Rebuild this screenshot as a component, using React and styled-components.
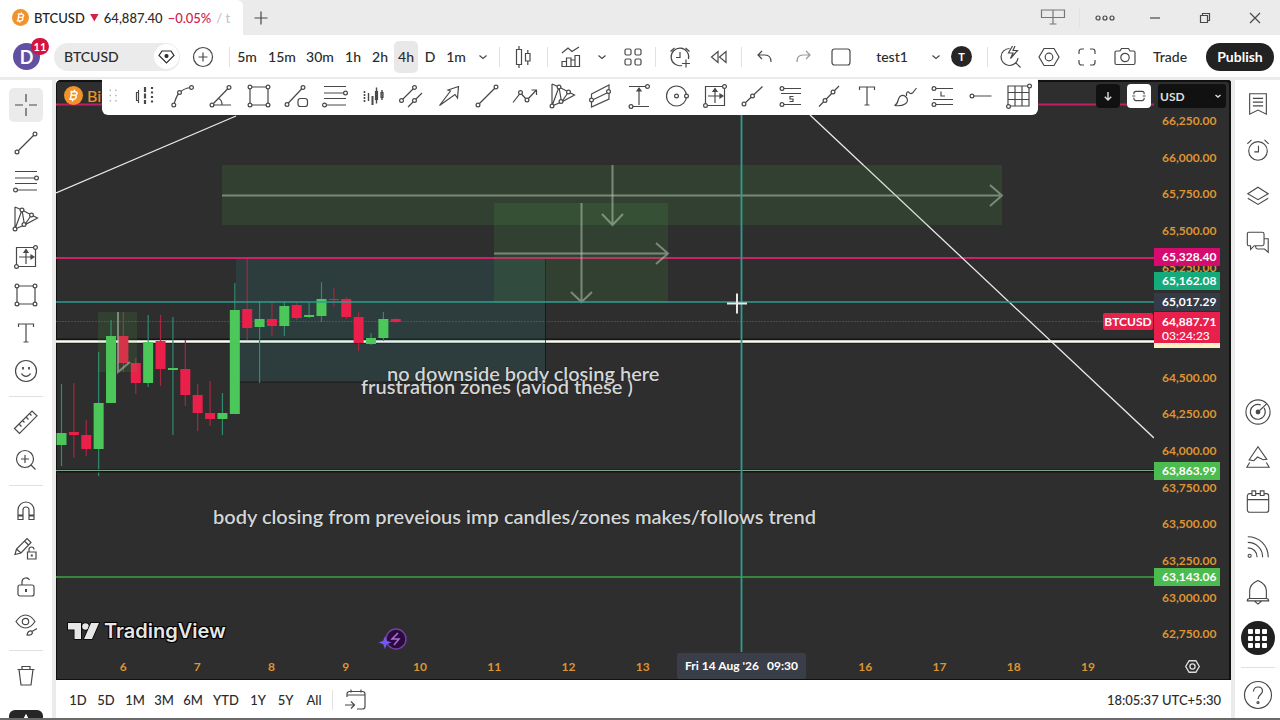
import styled, { createGlobalStyle } from 'styled-components';

const GlobalStyle = createGlobalStyle`
  * {
    box-sizing: border-box;
  }

  html,
  body,
  #root {
    height: 100%;
    margin: 0;
  }

  body {
    overflow: hidden;
    background: #fff;
    color: #2b2b2b;
    font-family: Lato, 'Open Sans', sans-serif;
    font-size: 14px;
    font-weight: 500;
  }

  button,
  select {
    margin: 0;
    padding: 0;
    border: 0;
    background: none;
    color: inherit;
    font: inherit;
  }
`;

/* ---------- icons ---------- */

const Svg = styled.svg`
  display: block;
  flex: none;
  fill: none;
  stroke: currentColor;
  stroke-width: ${(props) => props.$stroke || 1.2};
  overflow: visible;
`;

const Node = ({ x, y, r = 1.9 }) => <circle cx={x} cy={y} r={r} fill="#fff" />;

const shapes = {
  cross: <path d="M14 3v8M14 17v8M3 14h8M17 14h8" />,
  line: (
    <>
      <path d="M5.500 22.500L22.500 5.500" />
      <Node x={5} y={23} />
      <Node x={23} y={5} />
    </>
  ),
  fib: (
    <>
      <path d="M3 4.500h22M3 11h20M3 16.500h22M4 23h21" />
      <Node x={24.5} y={11} />
      <Node x={3.5} y={23} />
    </>
  ),
  pattern: (
    <>
      <path d="M3 2v22l7-19 2.500 15 13-7-6-3-9.500-5M3 2l7 3M3 24l9.500-4 7-10" />
      <Node x={10} y={5} />
      <Node x={19.5} y={10} />
      <Node x={12} y={19.5} />
      <Node x={3} y={24} />
    </>
  ),
  range: (
    <>
      <path d="M4.500 23.500V4.500h19v19zM14 21V8M7 14h13" />
      <path d="M14 6.500l2 3h-4zM22 14l-3-2v4z" fill="currentColor" />
      <Node x={23.5} y={4.5} />
      <Node x={4.5} y={23.5} />
    </>
  ),
  rect: (
    <>
      <path d="M5 5h18v18H5z" />
      <Node x={5} y={5} />
      <Node x={23} y={5} />
      <Node x={5} y={23} />
      <Node x={23} y={23} />
    </>
  ),
  text: <path d="M6.500 8V5h15v3M14 5v18M11.500 23h5" />,
  smile: (
    <>
      <circle cx="14" cy="14" r="10.500" />
      <path d="M9.500 16.500c1 2 2.500 2.800 4.500 2.800s3.500-.8 4.500-2.800" />
      <path d="M11 10v2.500M17 10v2.500" strokeWidth="1.800" />
    </>
  ),
  ruler: (
    <path d="M2.500 20.500L20 3l5 4.800L7.500 25.500zM7 16l2.500 2.500M10.500 12.500l2 2M14 9l2.500 2.500M17.500 5.500l2 2" />
  ),
  zoom: (
    <>
      <circle cx="13" cy="13" r="8.500" />
      <path d="M19 19l4.500 4.500M13 9v8M9 13h8" />
    </>
  ),
  magnet: (
    <>
      <path d="M6 22.500V13a8 8 0 0 1 16 0v9.500h-5V13a3 3 0 0 0-6 0v9.500z" />
      <path d="M6 18.500h5M17 18.500h5" strokeWidth="2" />
    </>
  ),
  pencilLock: (
    <>
      <path d="M3 19.500L4.500 14 15 3.500l4 4L9 18zM12.500 6l4 4M4.500 14L9 18" />
      <path d="M15.500 17h8.500v7h-8.500zM17 17v-2.500a2.500 2.500 0 0 1 5 0" />
      <path d="M19.800 19.500v2" strokeWidth="2" />
    </>
  ),
  lock: (
    <>
      <rect x="6" y="12" width="16" height="11" rx="2" />
      <path d="M10 12V8.500a4 4 0 0 1 7.500-1.500" />
      <path d="M14 16v3" strokeWidth="2" />
    </>
  ),
  eye: (
    <>
      <path d="M4 10.500C7 6 10 4 13.500 4s6.500 2 9.500 6.500C20 15 17 17 13.500 17S7 15 4 10.500z" />
      <circle cx="13.500" cy="10.500" r="3.200" />
      <path d="M15 24c.5-3 2-4.500 4.500-4l1 2c-1 2-3 2.500-5.500 2zM20 20.500l5-3" />
    </>
  ),
  trash: <path d="M5.500 7.500h17M7 7.500l2 15.500h10l2-15.500M10 7V4.500h8V7" />,
  bars: (
    <>
      <path d="M7.500 8v13M5 18.500h2.500M7.500 10.500H5.500v8" strokeWidth="1.200" />
      <path d="M14 5v17" strokeWidth="2.200" strokeDasharray="5 1.500" />
      <path d="M21 5v16" strokeWidth="2.200" strokeDasharray="2 2.500" />
    </>
  ),
  curve: (
    <>
      <path d="M5 23c1-5.500 3-9.500 5.500-12.500C13 8 17 6 22.500 5.500" />
      <Node x={4.8} y={23} />
      <Node x={10.5} y={10.5} />
      <Node x={22.5} y={5.5} />
    </>
  ),
  angle: (
    <>
      <path d="M21.500 6L5 23h19M11.500 16.500c2.500 1 3.500 3 3.500 6" />
      <Node x={22} y={5.5} />
      <Node x={5} y={23} />
    </>
  ),
  lineShape: (
    <>
      <path d="M4 22.500L19.500 6" />
      <rect x="15" y="16.500" width="9.500" height="8" rx="2.500" fill="#fff" />
      <Node x={4} y={22.5} />
      <Node x={20} y={5.5} />
    </>
  ),
  ghost: (
    <>
      <path d="M5.500 9v11" strokeWidth="1.600" strokeDasharray="2 1" />
      <path d="M9.500 11v8M17.500 5.500v16M23 8v10" strokeWidth="1.400" />
      <path d="M13.500 14v9" strokeWidth="2" />
      <path d="M16.500 9.500h2v8h-2zM22 10.500h2v5h-2z" />
    </>
  ),
  channel: (
    <>
      <path d="M4.500 18.500L17 6M11 25l14-14" />
      <Node x={4.5} y={18.5} />
      <Node x={17.5} y={5.5} />
      <Node x={17.5} y={18.5} />
    </>
  ),
  arrow: <path d="M4.500 23.500L15.500 9l-2.500-1 10.500-3.500-1 11.500-2.500-3.500z" />,
  path: (
    <>
      <path d="M2 20.500L9.500 11l6.500 7 9-9.500M20.500 8H25.500v5" />
      <Node x={9.5} y={10.5} />
      <Node x={16} y={18} />
    </>
  ),
  pitch: (
    <>
      <path d="M4.500 12L22 3v14L4.500 25zM4.500 18.500L22 10" />
      <Node x={4.5} y={18} />
      <Node x={21.5} y={9.5} />
    </>
  ),
  measure: (
    <>
      <path d="M4 4.500h17M6 24.500h18M14 23V7" />
      <path d="M14 6l2 3h-4z" fill="currentColor" />
      <Node x={22.5} y={4.5} />
      <Node x={6} y={24.5} />
    </>
  ),
  circle: (
    <>
      <circle cx="13.500" cy="14" r="10" />
      <Node x={13.5} y={14} />
      <Node x={23.5} y={14} />
    </>
  ),
  ray: (
    <>
      <path d="M5 22L23.500 4.500" />
      <Node x={5} y={22} />
      <Node x={13.5} y={14} />
    </>
  ),
  shortPos: (
    <>
      <path d="M5 6.500h19M4 11.500h20M5 22.500h19M16.500 14.500h-3.500v2.500h3v2.500H12.500" />
      <Node x={5} y={6.500} />
      <Node x={5} y={22.500} />
    </>
  ),
  extended: (
    <>
      <path d="M4 24.500L24 4" />
      <Node x={10} y={18.5} />
      <Node x={18} y={10} />
    </>
  ),
  brush: (
    <path d="M3.500 23.500c3-1 3-3.500 4-6.500 1-3.200 4-5 7-2.500s2.500 5.500-.5 7.500-6.500 2-10.500 1.500zM15.500 14C15 10 17 9 18 10.500s2 1.500 3.500.5l4-5" />
  ),
  longPos: (
    <>
      <path d="M5 6.500h19M4 17.500h20M5 22.500h19M12 9.500v4.500h4" />
      <Node x={5} y={6.500} />
      <Node x={5} y={22.500} />
    </>
  ),
  horizontal: (
    <>
      <path d="M5 14h19.500" />
      <Node x={5} y={14} />
    </>
  ),
  grid: (
    <>
      <path d="M3 4h21v20H3zM3 10.500h21M3 17.500h21M10 4v20M17 4v20" />
      <Node x={24.5} y={4} />
      <Node x={3.5} y={24.5} />
    </>
  ),
  candles: (
    <path d="M6.500 6.500h5v15h-5zM9 3v3.500M9 21.500V25M15.500 10.500h4.500v7.500h-4.500zM17.800 7v3.500M17.800 18v4" />
  ),
  indicators: (
    <path d="M5 10l6-5 4 3.500L22 4M5 23.500v-5h4.500v5zM9.500 23.500V15H14v8.500zM14 23.500V17h4v6.500zM18 23.500v-11h4.500v11z" />
  ),
  blocks: (
    <>
      <rect x="6" y="6" width="6" height="6" rx="1.500" />
      <rect x="16" y="6" width="6" height="6" rx="1.500" />
      <rect x="6" y="16" width="6" height="6" rx="1.500" />
      <rect x="16" y="16" width="6" height="6" rx="1.500" />
    </>
  ),
  alert: (
    <path d="M16 22.500A8.800 8.800 0 1 1 22.500 16M14 9v5.500h-4M4.500 8.500L8.500 5M23.500 8.500L19.500 5M20 16.500v8M16 20.500h8" />
  ),
  rewind: <path d="M13 8.500v11L6.500 14zM21 8.500v11L14.500 14z" />,
  undo: <path d="M11 8l-4 4 4 4M7 12h7c4 0 6 2 6 7" />,
  redo: <path d="M17 8l4 4-4 4M21 12h-7c-4 0-6 2-6 7" />,
  square: <rect x="5" y="6" width="18" height="16" rx="2.500" />,
  quick: (
    <path d="M12.500 5.500a8.500 8.500 0 1 0 8.500 9.500M18.500 19.500l5 5M15.500 3l-4 7h4.500l-2.500 5.500 7-8h-4.500L18 3" />
  ),
  hex: (
    <>
      <path d="M9 5.500h10l5 8.500-5 8.500H9L4 14z" />
      <circle cx="14" cy="14" r="3.800" />
    </>
  ),
  full: (
    <path d="M11 6H8.500A2.500 2.500 0 0 0 6 8.500V11M17 6h2.500A2.500 2.500 0 0 1 22 8.500V11M11 22H8.500A2.500 2.500 0 0 1 6 19.500V17M17 22h2.500a2.500 2.500 0 0 0 2.500-2.500V17" />
  ),
  reset: (
    <path d="M5 11V9.500A3.500 3.500 0 0 1 8.500 6h11A3.500 3.500 0 0 1 23 9.500V11M5 17v1.500A3.500 3.500 0 0 0 8.500 22h11a3.500 3.500 0 0 0 3.500-3.500V17M2.500 14h5M20.500 14h5" />
  ),
  camera: (
    <>
      <path d="M4 9.500a1.500 1.500 0 0 1 1.500-1.500H9l1.500-2.500h7L19 8h3.500A1.500 1.500 0 0 1 24 9.500V20a1.500 1.500 0 0 1-1.500 1.500h-17A1.500 1.500 0 0 1 4 20z" />
      <circle cx="14" cy="14.500" r="4.200" />
    </>
  ),
  plusRound: (
    <>
      <circle cx="14" cy="14" r="9.500" />
      <path d="M14 9.500v9M9.500 14h9" />
    </>
  ),
  chevron: <path d="M10.500 12.500l3.500 3 3.500-3" />,
  list: (
    <path d="M5 3h18v22l-9-4.500L5 25zM8.500 8h11M8.500 12h11M8.500 16h11" />
  ),
  clock: (
    <>
      <circle cx="14" cy="15" r="10" />
      <path d="M14.500 9.500V16H10M2.500 7.500L7 3M25.500 7.500L21 3" />
    </>
  ),
  layers: <path d="M14 4.500L25 11.500 14 18 3 11.500zM3 16.500L14 23l11-6.500" />,
  chat: (
    <path d="M4 3.500h14.500a2 2 0 0 1 2 2V16a2 2 0 0 1-2 2H10l-4 4v-4H4a1.500 1.500 0 0 1-1.500-1.500V5A1.500 1.500 0 0 1 4 3.500zM20.500 10.500H25V25l-4-3.500h-7.500a2 2 0 0 1-2-2V18" />
  ),
  radar: (
    <>
      <circle cx="14" cy="14" r="13" />
      <path d="M20.500 9.500A8 8 0 1 1 17 6.500M14 14L23.500 5" />
      <circle cx="14" cy="14" r="2" fill="currentColor" />
    </>
  ),
  peak: <path d="M14 3l9.500 13.500-4 .5-6-3-4 4-5-1zM5 20L2 25h24l-3-5" />,
  calendar: (
    <path d="M5 5h3M11 5h6M20 5h3a2.500 2.500 0 0 1 2.500 2.500v15A2.500 2.500 0 0 1 23 25H5a2.500 2.500 0 0 1-2.500-2.500v-15A2.500 2.500 0 0 1 5 5M2.500 11.500h23M7.500 2h4v5h-4zM16.500 2h4v5h-4z" />
  ),
  feed: (
    <>
      <path d="M3 3c12 0 22 9 22 22M3 9c9 0 16 7 16 16M3 15c6 0 10 4 10 10" />
      <circle cx="5" cy="23.500" r="1.700" />
    </>
  ),
  bell: (
    <path d="M14 1.500C8 4 5 8 5 13v8h18v-8c0-5-3-9-9-11.500zM5 21c-2 0-2.500 1-2.500 2.500h23c0-1.500-.5-2.500-2.500-2.500M10.500 24l3.500 3 3.500-3" />
  ),
  help: (
    <>
      <circle cx="14" cy="14" r="13.500" />
      <path d="M9.500 10.500c0-3 2-4.500 4.500-4.500s4.500 1.500 4.500 4c0 3.500-4.500 3.500-4.500 8" />
      <circle cx="14" cy="21.500" r="1" />
    </>
  ),
  goto: (
    <path d="M5 9h18M5 11V8a2.500 2.500 0 0 1 2.500-2.500h13A2.500 2.500 0 0 1 23 8v12.500a2.500 2.500 0 0 1-2.500 2.500H15M9 3.500v3M19 3.500v3M3 19h9M9 15.500l3.500 3.500L9 22.500" />
  ),
  minimize: <path d="M9 14h10" />,
  restore: <path d="M9.500 11.500h7v7h-7zM11.500 11V9.500h7v7H17" />,
  close: <path d="M9 9l10 10M19 9L9 19" />,
  plus: <path d="M14 7.500v13M7.500 14h13" />,
  more: (
    <>
      <circle cx="7" cy="14" r="2" />
      <circle cx="14" cy="14" r="2" />
      <circle cx="21" cy="14" r="2" />
    </>
  ),
  monitors: <path d="M2.500 6h23v7.500h-23zM14 6v14M10.500 20h7" />,
  down: <path d="M14 8.500v11M9.500 15l4.500 4.500 4.500-4.500" />,
  diamond: <path d="M14 2l6 12-6 12-6-12z" fill="currentColor" />,
  handle: (
    <path d="M10 7v14M16 7v14" strokeWidth="1.600" strokeDasharray="1.600 4" />
  ),
};

const Icon = ({ name, size = 28, stroke }) => (
  <Svg width={size} height={size} viewBox="0 0 28 28" $stroke={stroke} aria-hidden="true">
    {shapes[name]}
  </Svg>
);

const Coin = ({ size }) => (
  <Svg width={size} height={size} viewBox="0 0 18 18" aria-hidden="true">
    <circle cx="9" cy="9" r="9" fill="#f0932b" stroke="none" />
    <path
      d="M7.500 4.500L6 13M6 5.500h4.500c2.500 0 2.500 3.300-.5 3.300H7M9.800 8.800c2.800.2 2 3.700-.8 3.700H5M10 3.500l-.4 2M8.300 12.500L8 14.500"
      stroke="#fff"
      strokeWidth="1.400"
    />
  </Svg>
);

/* ---------- page frame ---------- */

const Page = styled.div`
  display: flex;
  flex-direction: column;
  height: 100vh;
  border-bottom: 2px solid #6a6a6a;
`;

const TitleBar = styled.header`
  display: flex;
  flex: none;
  align-items: center;
  height: 35px;
  background: #ebebeb;
`;

const Tab = styled.div`
  display: flex;
  align-items: center;
  gap: 5px;
  width: 243px;
  height: 100%;
  padding: 0 12px;
  overflow: hidden;
  border-radius: 0 6px 0 0;
  background: #fff;
  font-size: 13px;
  white-space: nowrap;
`;

const TabSymbol = styled.span`
  color: #222;
`;

const Triangle = styled.span`
  flex: none;
  width: 9px;
  height: 8px;
  background: #d0224a;
  clip-path: polygon(0 0, 100% 0, 50% 100%);
`;

const Change = styled.span`
  color: #d0224a;
`;

const Faded = styled.span`
  color: #c4c4c4;
`;

const IconButton = styled.button`
  display: flex;
  flex: none;
  align-items: center;
  justify-content: center;
  width: ${(props) => props.$width || 38}px;
  height: ${(props) => props.$height || 38}px;
  color: ${(props) => props.$color || '#484848'};
`;

const Spacer = styled.div`
  flex: 1;
`;

const Divider = styled.div`
  flex: none;
  width: 1px;
  height: 20px;
  margin: 0 ${(props) => (props.$tight ? 0 : 4)}px 0 3px;
  background: #e2e2e2;
`;

const Toolbar = styled.nav`
  display: flex;
  flex: none;
  align-items: center;
  height: 45px;
  padding: 1px 6px 0 10px;
  border-bottom: 3px solid #ebebeb;
  background: #fff;
`;

const Avatar = styled.button`
  position: relative;
  width: 30px;
  height: 27px;
  margin-right: 14px;
  text-align: left;
`;

const AvatarLetter = styled.span`
  display: flex;
  align-items: center;
  justify-content: center;
  width: 27px;
  height: 27px;
  margin-left: 3px;
  border-radius: 50%;
  background: #6250a0;
  color: #fff;
  font-size: 18px;
  font-weight: bold;
`;

const Badge = styled.span`
  position: absolute;
  top: -5px;
  right: -9px;
  width: 18px;
  border-radius: 9px;
  background: #d6123f;
  color: #fff;
  font-size: 11px;
  font-weight: bold;
  line-height: 17px;
  text-align: center;
`;

const SymbolButton = styled.button`
  display: flex;
  align-items: center;
  justify-content: space-between;
  width: 126px;
  height: 28px;
  padding: 0 1px 0 10px;
  border-radius: 14px;
  background: #ebebeb;
`;

const Gem = styled.span`
  display: flex;
  align-items: center;
  justify-content: center;
  width: 25px;
  height: 25px;
  border-radius: 50%;
  background: #fff;
`;

const TextButton = styled.button`
  flex: none;
  width: ${(props) => props.$width}px;
  height: 32px;
  border-radius: 5px;
  background: ${(props) => (props.$active ? '#e8e8e8' : 'none')};
  text-align: center;
`;

const RoundT = styled.span`
  width: 21px;
  margin: 0 2px 0 3px;
  border-radius: 50%;
  background: #262626;
  color: #fff;
  font-size: 11px;
  font-weight: bold;
  line-height: 21px;
  text-align: center;
`;

const Publish = styled.button`
  width: 68px;
  height: 28px;
  margin-left: 10px;
  border-radius: 14px;
  background: #222;
  color: #fff;
  font-weight: bold;
`;

const Workspace = styled.div`
  display: flex;
  flex: 1;
  min-height: 0;
`;

const LeftRail = styled.aside`
  display: flex;
  flex: none;
  flex-direction: column;
  align-items: center;
  width: 56px;
  padding-top: 6px;
  overflow: hidden;
  border-right: 4px solid #ebebeb;
`;

const RailButton = styled(IconButton)`
  width: 34px;
  height: ${(props) => (props.$active ? 34 : 38)}px;
  margin: ${(props) => (props.$active ? 2 : 0)}px 0;
  border-radius: 5px;
  background: ${(props) => (props.$active ? '#ebebeb' : 'none')};
`;

const Rule = styled.div`
  flex: none;
  width: 34px;
  height: 1px;
  margin: 6px 0;
  background: #e0e0e0;
`;

const RailFooter = styled(IconButton)`
  width: 34px;
  height: 34px;
  margin-top: 15px;
  border-radius: 6px;
  background: #262626;
`;

const RightRail = styled.aside`
  display: flex;
  flex: none;
  flex-direction: column;
  align-items: center;
  width: 49px;
  padding: 1px 0 2px;
  border-left: 4px solid #ebebeb;
`;

const AppsButton = styled.button`
  display: grid;
  flex: none;
  grid-template-columns: repeat(3, 5px);
  place-content: center;
  gap: 2px;
  width: 34px;
  height: 34px;
  margin: 7px 0 6px;
  border-radius: 50%;
  background: #202020;
`;

const Dot = styled.span`
  width: 5px;
  height: 5px;
  border-radius: 1px;
  background: #fff;
`;

/* ---------- chart ---------- */

const Center = styled.main`
  position: relative;
  display: flex;
  flex: 1;
  flex-direction: column;
  min-width: 0;
`;

const Chart = styled.section`
  display: grid;
  flex: 1;
  grid-template-rows: 1fr 28px;
  grid-template-columns: 1fr 77px;
  min-height: 0;
  overflow: hidden;
  border-radius: 5px 3px 0 0;
  background: #2e2e2e;
  box-shadow: inset -2px 2px #111, inset 1px -1px #111;
`;

const Plot = styled.div`
  position: relative;
  min-width: 0;
`;

const Canvas = styled.svg`
  display: block;
  position: absolute;
  width: 100%;
  height: 100%;
`;

const Note = styled.text`
  fill: #d4d6d6;
  stroke: #1c1c1c;
  stroke-width: 1px;
  paint-order: stroke;
  font-size: 20px;
  font-weight: 600;
`;

const Instrument = styled.div`
  position: absolute;
  top: 6px;
  left: 8px;
  display: flex;
  align-items: center;
  gap: 4px;
  color: #f0932b;
  font-size: 16px;
`;

const Brand = styled.div`
  position: absolute;
  bottom: 8px;
  left: 12px;
  display: flex;
  align-items: center;
  gap: 5px;
  color: #e6e6e6;
  font-family: Inter, sans-serif;
  font-size: 20px;
  font-weight: 600;
  line-height: 26px;
  text-shadow: 1px 1px #000, -1px -1px #000, 1px -1px #000, -1px 1px #000;
`;

const PriceScale = styled.div`
  position: relative;
  display: flex;
  flex-direction: column;
  padding-top: 22px;
  color: #dd9432;
  font-size: 12px;
  font-weight: bold;
`;

const Price = styled.div`
  display: flex;
  flex: 1;
  align-items: center;
  padding-left: 8px;
`;

const PriceTag = styled.div`
  position: absolute;
  top: ${(props) => props.$top}px;
  left: 0;
  width: 66px;
  padding-top: ${(props) => (props.$edge ? 3 : 0)}px;
  padding-left: 8px;
  border-bottom: ${(props) => (props.$edge ? '5px solid #fdf0c4' : '0')};
  background: ${(props) => props.$color};
  color: #fff;
  line-height: ${(props) => (props.$edge ? 14 : 18)}px;
`;

const Countdown = styled.div`
  font-weight: 500;
`;

const SymbolTag = styled.div`
  position: absolute;
  top: 233px;
  right: 1px;
  width: 50px;
  border-radius: 2px;
  background: #e8204c;
  color: #fff;
  font-size: 12px;
  font-weight: bold;
  line-height: 17px;
  text-align: center;
`;

const ScaleTools = styled.div`
  position: absolute;
  top: 4px;
  right: 5px;
  display: flex;
  align-items: center;
  gap: 7px;
`;

const ScaleButton = styled(IconButton)`
  width: 24px;
  height: 24px;
  border-radius: 4px;
  background: ${(props) => props.$bg};
`;

const Currency = styled.label`
  position: relative;
  display: flex;
  align-items: center;
  width: 68px;
  height: 24px;
  border-radius: 3px;
  background: #111;
  color: #ddd;
  font-size: 12px;
  font-weight: bold;

  select {
    width: 100%;
    height: 100%;
    padding-left: 2px;
    appearance: none;
  }

  svg {
    position: absolute;
    right: -2px;
    pointer-events: none;
  }
`;

const TimeScale = styled.div`
  position: relative;
  display: flex;
  align-items: center;
  padding: 0 29px 0 30px;
  color: #dd9432;
  font-size: 12px;
  font-weight: bold;
`;

const Day = styled.div`
  flex: 1;
  text-align: center;
`;

const TimeTag = styled.div`
  position: absolute;
  top: 1px;
  left: 621px;
  display: flex;
  justify-content: space-between;
  width: 129px;
  padding: 0 8px;
  border-radius: 2px;
  background: #3a3e48;
  color: #fff;
  line-height: 26px;
  white-space: nowrap;
`;

const Corner = styled.div`
  display: flex;
  align-items: center;
  justify-content: center;
  color: #ddd;
`;

const Favorites = styled.div`
  position: absolute;
  top: -1px;
  left: 46px;
  display: flex;
  align-items: center;
  width: 936px;
  height: 36px;
  padding-bottom: 2px;
  overflow: hidden;
  border-radius: 0 0 6px 6px;
  background: #fff;
`;

const Footer = styled.footer`
  display: flex;
  flex: none;
  align-items: center;
  height: 38px;
  padding: 1px 10px 0 8px;
  background: #fff;
  font-size: 13px;
`;

const intervals = [
  ['5m', 34],
  ['15m', 36],
  ['30m', 40],
  ['1h', 26],
  ['2h', 28],
  ['4h', 24],
  ['D', 24],
  ['1m', 28],
];

const ranges = [
  ['1D', 28],
  ['5D', 28],
  ['1M', 30],
  ['3M', 28],
  ['6M', 30],
  ['YTD', 36],
  ['1Y', 28],
  ['5Y', 27],
  ['All', 30],
];

const favorites = [
  'bars', 'curve', 'angle', 'rect', 'lineShape', 'fib', 'ghost', 'channel',
  'arrow', 'line', 'path', 'pattern', 'pitch', 'measure', 'circle', 'range',
  'ray', 'shortPos', 'extended', 'text', 'brush', 'longPos', 'horizontal', 'grid',
];

const prices = [
  '66,250.00', '66,000.00', '65,750.00', '65,500.00', '65,250.00', '', '',
  '64,500.00', '64,250.00', '64,000.00', '63,750.00', '63,500.00', '63,250.00',
  '63,000.00', '62,750.00',
];

const days = ['6', '7', '8', '9', '10', '11', '12', '13', '', '', '16', '17', '18', '19'];

// [high, body top, body bottom, low, rising]
const candles = [
  [304, 353, 365, 386, 1],
  [303, 352, 355, 378, 0],
  [340, 355, 369, 376, 0],
  [272, 323, 369, 396, 1],
  [240, 256, 323, 323, 1],
  [232, 256, 283, 292, 0],
  [278, 283, 303, 314, 0],
  [235, 262, 303, 307, 1],
  [235, 261, 289, 306, 0],
  [237, 288, 290, 355, 1],
  [260, 289, 315, 326, 0],
  [304, 315, 333, 351, 0],
  [301, 333, 339, 346, 0],
  [313, 333, 339, 355, 1],
  [203, 230, 334, 334, 1],
  [179, 229, 248, 260, 0],
  [221, 239, 247, 303, 1],
  [222, 239, 246, 256, 0],
  [221, 226, 246, 256, 1],
  [222, 225, 238, 240, 0],
  [223, 235, 237, 238, 1],
  [202, 219, 236, 242, 1],
  [208, 219, 220, 227, 0],
  [217, 219, 237, 239, 0],
  [232, 237, 263, 271, 0],
  [253, 258, 264, 265, 1],
  [232, 239, 258, 261, 1],
  [238, 239, 242, 243, 0],
];

const Drawing = () => (
  <Canvas role="img" aria-label="BTCUSD price chart">
    <line x1="0" x2="100%" y1="24.500" y2="24.500" stroke="#c01f62" strokeWidth="2" />
    <line x1="0" x2="100%" y1="178" y2="178" stroke="#c92468" strokeWidth="2" />
    <line x1="0" x2="100%" y1="241.500" y2="241.500" stroke="#b02844" strokeDasharray="2 1" strokeOpacity="0.800" />
    <line x1="0" x2="100%" y1="261" y2="261" stroke="#151515" strokeWidth="5" />
    <line x1="0" x2="100%" y1="261.500" y2="261.500" stroke="#fffff4" strokeWidth="2.500" />
    <path d="M0 113L180 36M754 35L1098 358" stroke="#e8e8e8" strokeWidth="1.300" fill="none" />
    <rect x="180" y="179" width="309" height="123" fill="#26a6a6" fillOpacity="0.120" />
    <path d="M489.500 179v123M180 302h309" stroke="#111" fill="none" strokeOpacity="0.700" />
    {candles.map(([high, top, bottom, low, up], i) => {
      const x = 5.5 + i * 12.38;
      return (
        <g key={i} fill={up ? '#4cc75a' : '#ea1f4a'}>
          <rect x={x - 0.6} y={high} width="1.200" height={low - high} fill={up ? '#2f8a70' : '#a8263f'} />
          <rect x={x - 5} y={top} width="10" height={bottom - top} />
        </g>
      );
    })}
    <g fill="#4caf50" fillOpacity="0.140">
      <rect x="166" y="85" width="780" height="60" />
      <rect x="438" y="123" width="174" height="100" />
      <rect x="42" y="232" width="39" height="60" />
    </g>
    <g stroke="#b4c6b4" strokeOpacity="0.550" strokeWidth="2" fill="none">
      <path d="M166 115.500h778M934 105l12 10.500-12 10.500" />
      <path d="M556.500 85v60M546 134l10.500 11 10.500-11" />
      <path d="M438 173.500h173M600 163l12 10.500-12 10.500" />
      <path d="M525.500 123v99M515 212l10.500 10 10.500-10" />
      <path d="M62 232v60l12-10" />
    </g>
    <line x1="0" x2="100%" y1="391" y2="391" stroke="#141414" strokeWidth="3" />
    <line x1="0" x2="100%" y1="390.500" y2="390.500" stroke="#7fa389" strokeWidth="1" />
    <line x1="0" x2="100%" y1="497" y2="497" stroke="#37863b" strokeWidth="2" />
    <line x1="0" x2="100%" y1="222" y2="222" stroke="#2f9c91" strokeWidth="1.500" />
    <line x1="685.500" x2="685.500" y1="0" y2="100%" stroke="#2f9c91" strokeWidth="1.800" />
    <Note x="331" y="301">no downside body closing here</Note>
    <Note x="305" y="314">frustration zones (aviod these )</Note>
    <Note x="157" y="444">body closing from preveious imp candles/zones makes/follows trend</Note>
    <path d="M671 223.500h20M681 213.500v20" stroke="#e8e8e8" strokeWidth="2" />
    <circle cx="340" cy="559" r="10" fill="#2a0b3d" stroke="#71409a" strokeWidth="1.500" />
    <path d="M342 553l-6 6h7l-5 6" stroke="#b070d8" strokeWidth="1.500" fill="none" />
    <path d="M329 556l1.800 4.700 4.700 1.800-4.700 1.800L329 569l-1.800-4.700-4.700-1.800 4.700-1.800z" fill="#7357f0" />
  </Canvas>
);

const App = () => (
  <>
    <GlobalStyle />
    <Page>
      <TitleBar>
        <Tab>
          <Coin size={17} />
          <TabSymbol>BTCUSD</TabSymbol>
          <Triangle />
          <span>64,887.40</span>
          <Change>−0.05%</Change>
          <Faded>/ t</Faded>
        </Tab>
        <IconButton aria-label="New tab" $width={35} $height={34}>
          <Icon name="plus" />
        </IconButton>
        <Spacer />
        <IconButton aria-label="Displays" $width={46} $height={34} $color="#777">
          <Icon name="monitors" />
        </IconButton>
        <Divider $tight />
        <IconButton aria-label="More" $width={50} $height={34}>
          <Icon name="more" />
        </IconButton>
        {['minimize', 'restore', 'close'].map((name) => (
          <IconButton key={name} aria-label={name} $width={50} $height={34}>
            <Icon name={name} />
          </IconButton>
        ))}
      </TitleBar>

      <Toolbar>
        <Avatar aria-label="Account, 11 notifications">
          <AvatarLetter>D</AvatarLetter>
          <Badge>11</Badge>
        </Avatar>
        <SymbolButton>
          BTCUSD
          <Gem>
            <Svg width="17" height="14" viewBox="0 0 17 14" aria-hidden="true">
              <path d="M4 1h9l3 4.500L8.500 13 1 5.500z" />
              <circle cx="8.500" cy="6" r="1.500" fill="currentColor" />
            </Svg>
          </Gem>
        </SymbolButton>
        <IconButton aria-label="Compare symbols" $width={46}>
          <Icon name="plusRound" />
        </IconButton>
        <Divider $tight />
        {intervals.map(([label, width]) => (
          <TextButton key={label} $width={width} $active={label === '4h'}>
            {label}
          </TextButton>
        ))}
        <IconButton aria-label="All intervals" $width={26}>
          <Icon name="chevron" />
        </IconButton>
        <Divider />
        <IconButton aria-label="Chart type" $width={40}>
          <Icon name="candles" />
        </IconButton>
        <Divider />
        <IconButton aria-label="Indicators" $width={38}>
          <Icon name="indicators" />
        </IconButton>
        <IconButton aria-label="Favorite indicators" $width={24}>
          <Icon name="chevron" />
        </IconButton>
        <IconButton aria-label="Templates">
          <Icon name="blocks" />
        </IconButton>
        <Divider />
        <IconButton aria-label="Create alert" $width={40}>
          <Icon name="alert" />
        </IconButton>
        <IconButton aria-label="Replay">
          <Icon name="rewind" />
        </IconButton>
        <Divider />
        <IconButton aria-label="Undo">
          <Icon name="undo" />
        </IconButton>
        <IconButton aria-label="Redo" $color="#999">
          <Icon name="redo" />
        </IconButton>
        <IconButton aria-label="Layout">
          <Icon name="square" />
        </IconButton>
        <TextButton $width={64}>test1</TextButton>
        <IconButton aria-label="Manage layouts" $width={24}>
          <Icon name="chevron" />
        </IconButton>
        <RoundT>T</RoundT>
        <Spacer />
        <Divider />
        {['quick', 'hex', 'full', 'camera'].map((name) => (
          <IconButton key={name} aria-label={name}>
            <Icon name={name} />
          </IconButton>
        ))}
        <TextButton $width={52}>Trade</TextButton>
        <Publish>Publish</Publish>
      </Toolbar>

      <Workspace>
        <LeftRail>
          {['cross', 'line', 'fib', 'pattern', 'range', 'rect', 'text', 'smile'].map((name) => (
            <RailButton key={name} aria-label={name} $active={name === 'cross'}>
              <Icon name={name} />
            </RailButton>
          ))}
          <Rule />
          {['ruler', 'zoom'].map((name) => (
            <RailButton key={name} aria-label={name}>
              <Icon name={name} />
            </RailButton>
          ))}
          <Rule />
          {['magnet', 'pencilLock', 'lock', 'eye'].map((name) => (
            <RailButton key={name} aria-label={name}>
              <Icon name={name} />
            </RailButton>
          ))}
          <Rule />
          <RailButton aria-label="trash">
            <Icon name="trash" />
          </RailButton>
          <RailFooter aria-label="Favorite tools" $color="#fff">
            <Icon name="diamond" />
          </RailFooter>
        </LeftRail>

        <Center>
          <Chart>
            <Plot>
              <Drawing />
              <Instrument>
                <Coin size={19} />
                Bitcoin
              </Instrument>
              <Brand>
                <Svg width="31" height="17" viewBox="0 0 31 17" aria-hidden="true">
                  <g fill="#e6e6e6" stroke="#000" strokeWidth="1.500" paintOrder="stroke">
                    <path d="M0 0h13v16H6.500V6.500H0z" />
                    <circle cx="17.500" cy="3.500" r="3.300" />
                    <path d="M23 0h8l-7 16h-8z" />
                  </g>
                </Svg>
                TradingView
              </Brand>
              <SymbolTag>BTCUSD</SymbolTag>
            </Plot>
            <PriceScale>
              {prices.map((price, i) => (
                <Price key={i}>{price}</Price>
              ))}
              <PriceTag $top={168} $color="#d60b70">65,328.40</PriceTag>
              <PriceTag $top={192} $color="#16a97a">65,162.08</PriceTag>
              <PriceTag $top={213} $color="#343a46">65,017.29</PriceTag>
              <PriceTag $top={232} $color="#e8204c" $edge>
                64,887.71
                <Countdown>03:24:23</Countdown>
              </PriceTag>
              <PriceTag $top={382} $color="#4cbb50">63,863.99</PriceTag>
              <PriceTag $top={488} $color="#4cbb50">63,143.06</PriceTag>
            </PriceScale>
            <TimeScale>
              {days.map((day, i) => (
                <Day key={i}>{day}</Day>
              ))}
              <TimeTag>
                <span>Fri 14 Aug '26</span>
                <span>09:30</span>
              </TimeTag>
            </TimeScale>
            <Corner>
              <Icon name="hex" size={19} stroke={2} />
            </Corner>
          </Chart>

          <ScaleTools>
            <ScaleButton aria-label="Scroll to latest" $bg="#111" $color="#ddd">
              <Icon name="down" size={20} stroke={2} />
            </ScaleButton>
            <ScaleButton aria-label="Reset scale" $bg="#fff">
              <Icon name="reset" size={16} stroke={2} />
            </ScaleButton>
            <Currency>
              <select aria-label="Currency" defaultValue="USD">
                <option>USD</option>
              </select>
              <Icon name="chevron" size={20} stroke={2} />
            </Currency>
          </ScaleTools>

          <Favorites>
            <IconButton aria-label="Move toolbar" $width={24} $color="#b5b5b5">
              <Icon name="handle" size={26} />
            </IconButton>
            {favorites.map((name) => (
              <IconButton key={name} aria-label={name}>
                <Icon name={name} />
              </IconButton>
            ))}
          </Favorites>

          <Footer>
            {ranges.map(([label, width]) => (
              <TextButton key={label} $width={width}>
                {label}
              </TextButton>
            ))}
            <Divider />
            <IconButton aria-label="Go to date">
              <Icon name="goto" />
            </IconButton>
            <Spacer />
            <span>18:05:37 UTC+5:30</span>
          </Footer>
        </Center>

        <RightRail>
          {['list', 'clock', 'layers', 'chat'].map((name) => (
            <IconButton key={name} aria-label={name} $height={46}>
              <Icon name={name} size={26} />
            </IconButton>
          ))}
          <Spacer />
          {['radar', 'peak', 'calendar', 'feed', 'bell'].map((name) => (
            <IconButton key={name} aria-label={name} $height={45}>
              <Icon name={name} size={26} />
            </IconButton>
          ))}
          <AppsButton aria-label="Apps">
            {Array.from({ length: 9 }, (_, i) => (
              <Dot key={i} />
            ))}
          </AppsButton>
          <Rule />
          <IconButton aria-label="help" $height={42}>
            <Icon name="help" />
          </IconButton>
        </RightRail>
      </Workspace>
    </Page>
  </>
);

export default App;
